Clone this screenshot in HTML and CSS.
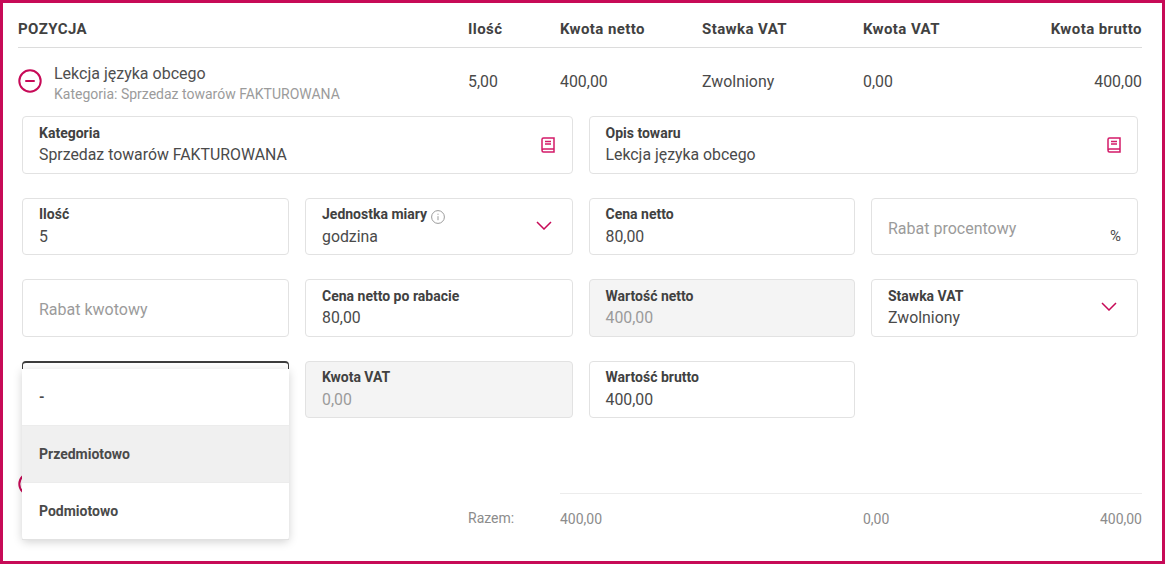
FILE: index.html
```html
<!DOCTYPE html>
<html lang="pl">
<head>
<meta charset="utf-8">
<title>Pozycje</title>
<link rel="stylesheet" href="styles.css">
</head>
<body>
<main class="frame">
  <div class="cols head">
    <div>POZYCJA</div><div>Ilość</div><div>Kwota netto</div><div>Stawka VAT</div><div>Kwota VAT</div><div class="end">Kwota brutto</div>
  </div>
  <div class="cols item">
    <div class="item-main">
      <svg class="round" viewBox="0 0 24 24"><circle cx="12" cy="12" r="10.7"/><path d="M8 12h8"/></svg>
      <div class="item-text">
        <div class="item-name">Lekcja języka obcego</div>
        <div class="item-sub">Kategoria: Sprzedaz towarów FAKTUROWANA</div>
      </div>
    </div>
    <div>5,00</div><div>400,00</div><div>Zwolniony</div><div>0,00</div><div class="end">400,00</div>
  </div>
  <form class="form">
    <div class="field wide"><span class="label">Kategoria</span><span class="value">Sprzedaz towarów FAKTUROWANA</span>
      <svg class="book" viewBox="0 0 14 16"><path d="M1 13V2.500A1.500 1.500 0 0 1 2.500 1H13v11H2.500A1.500 1.500 0 0 0 1 13.500 1.500 1.500 0 0 0 2.500 15H13v-3M4 4.500h6M4 7h6"/></svg></div>
    <div class="field wide"><span class="label">Opis towaru</span><span class="value">Lekcja języka obcego</span>
      <svg class="book" viewBox="0 0 14 16"><path d="M1 13V2.500A1.500 1.500 0 0 1 2.500 1H13v11H2.500A1.500 1.500 0 0 0 1 13.500 1.500 1.500 0 0 0 2.500 15H13v-3M4 4.500h6M4 7h6"/></svg></div>

    <div class="field"><span class="label">Ilość</span><span class="value">5</span></div>
    <div class="field"><span class="label">Jednostka miary
      <svg class="info" viewBox="0 0 14 14"><circle cx="7" cy="7" r="6.400"/><path d="M7 6.200v4M7 3.700v1.100"/></svg></span><span class="value">godzina</span>
      <svg class="chev" viewBox="0 0 16 9"><path d="M1 1l7 7 7-7"/></svg></div>
    <div class="field"><span class="label">Cena netto</span><span class="value">80,00</span></div>
    <div class="field empty"><span class="placeholder">Rabat procentowy</span><span class="unit">%</span></div>

    <div class="field empty"><span class="placeholder">Rabat kwotowy</span></div>
    <div class="field"><span class="label">Cena netto po rabacie</span><span class="value">80,00</span></div>
    <div class="field off"><span class="label">Wartość netto</span><span class="value">400,00</span></div>
    <div class="field"><span class="label">Stawka VAT</span><span class="value">Zwolniony</span>
      <svg class="chev" viewBox="0 0 16 9"><path d="M1 1l7 7 7-7"/></svg></div>

    <div class="field open">
      <ul class="menu">
        <li>-</li>
        <li class="active">Przedmiotowo</li>
        <li>Podmiotowo</li>
      </ul>
    </div>
    <div class="field off"><span class="label">Kwota VAT</span><span class="value">0,00</span></div>
    <div class="field"><span class="label">Wartość brutto</span><span class="value">400,00</span></div>
  </form>
  <div class="add">
    <svg class="round" viewBox="0 0 24 24"><circle cx="12" cy="12" r="10.700"/><path d="M8 12h8M12 8v8"/></svg>
  </div>
  <div class="cols total">
    <div></div><div class="razem">Razem:</div><div class="sum">400,00</div><div class="sum"></div><div class="sum">0,00</div><div class="sum end">400,00</div>
  </div>
</main>
</body>
</html>
```
FILE: styles.css
```css
* { box-sizing: border-box; }
html, body { margin: 0; padding: 0; }
body {
  font-family: Roboto, "Liberation Sans", sans-serif;
  color: #4a4a4a;
  background: #fff;
}
.frame {
  width: 1165px;
  height: 564px;
  border: 3px solid #c70a57;
  padding: 0 20px 0 15px;
  overflow: hidden;
}
.cols {
  display: grid;
  grid-template-columns: 450px 92px 142px 161px 130px 1fr;
  align-items: center;
}
.end { text-align: right; }
.head {
  height: 45px;
  padding-top: 8px;
  border-bottom: 1px solid #dcdcdc;
  font-size: 15px;
  letter-spacing: 0.42px;
  font-weight: 700;
  color: #414141;
}
.item {
  height: 68px;
  padding-bottom: 2px;
  font-size: 15.9px;
}
.item-main { display: flex; align-items: center; gap: 12px; }
.item-text { padding-top: 6px; }
.round {
  width: 24px;
  height: 24px;
  flex: none;
  fill: none;
  stroke: #c70a57;
  stroke-width: 2;
  stroke-linecap: round;
}
.item-name { font-size: 16px; line-height: 20px; color: #4f4f4f; }
.item-sub { font-size: 14px; line-height: 20px; color: #9b9b9b; }
.form {
  display: grid;
  grid-template-columns: 267px 267.5px 266.5px 267px;
  grid-auto-rows: 57.5px;
  column-gap: 16px;
  row-gap: 24px;
  margin-left: 4px;
}
.wide { grid-column: span 2; }
.field {
  position: relative;
  display: flex;
  flex-direction: column;
  justify-content: flex-start;
  padding: 6.5px 16px 0;
  border: 1px solid #e2e2e2;
  border-radius: 4px;
  background: #fff;
}
.label {
  display: flex;
  align-items: center;
  gap: 4px;
  font-size: 14px;
  line-height: 18px;
  font-weight: 700;
  color: #414141;
}
.value { font-size: 15.85px; line-height: 20px; margin-top: 3.5px; color: #4a4a4a; }
.off { background: #f4f4f4; }
.off .value { color: #9b9b9b; }
.empty { justify-content: center; padding-top: 4px; }
.placeholder { font-size: 16px; color: #9b9b9b; }
.unit {
  position: absolute;
  right: 16px;
  bottom: 9.5px;
  font-size: 15px;
  color: #4a4a4a;
}
.book {
  position: absolute;
  right: 16.500px;
  top: 20px;
  width: 14px;
  height: 16px;
  fill: none;
  stroke: #d31a68;
  stroke-width: 1.500;
}
.chev {
  position: absolute;
  right: 20px;
  top: 22px;
  width: 16px;
  height: 9px;
  fill: none;
  stroke: #c70a57;
  stroke-width: 1.500;
}
.info {
  width: 14px;
  height: 14px;
  fill: none;
  stroke: #9b9b9b;
  stroke-width: 1;
  transform: translateY(3px);
}
.open {
  border: 1px solid #3c3c3c;
  border-width: 2px 1px 1px;
}
.menu {
  position: absolute;
  z-index: 2;
  left: -1px;
  right: -1px;
  top: 6px;
  margin: 0;
  padding: 0;
  list-style: none;
  background: #fff;
  border-radius: 0 0 4px 4px;
  box-shadow: 0 2px 10px rgba(0, 0, 0, 0.180);
}
.menu li {
  height: 57px;
  display: flex;
  align-items: center;
  padding: 0 17px;
  font-size: 14px;
  font-weight: 700;
  color: #4a4a4a;
  border-bottom: 1px solid #ececec;
}
.menu li:last-child { border-bottom-color: #e2e2e2; }
.menu li.active { background: #f0f0f0; }
.add { margin-top: 54px; height: 24px; }
.total {
  margin-top: -3px;
  font-size: 14px;
  color: #8c8c8c;
  height: 50px;
}
.sum {
  height: 100%;
  display: flex;
  align-items: center;
  border-top: 1px solid #ececec;
}
.sum.end { justify-content: flex-end; }
```
